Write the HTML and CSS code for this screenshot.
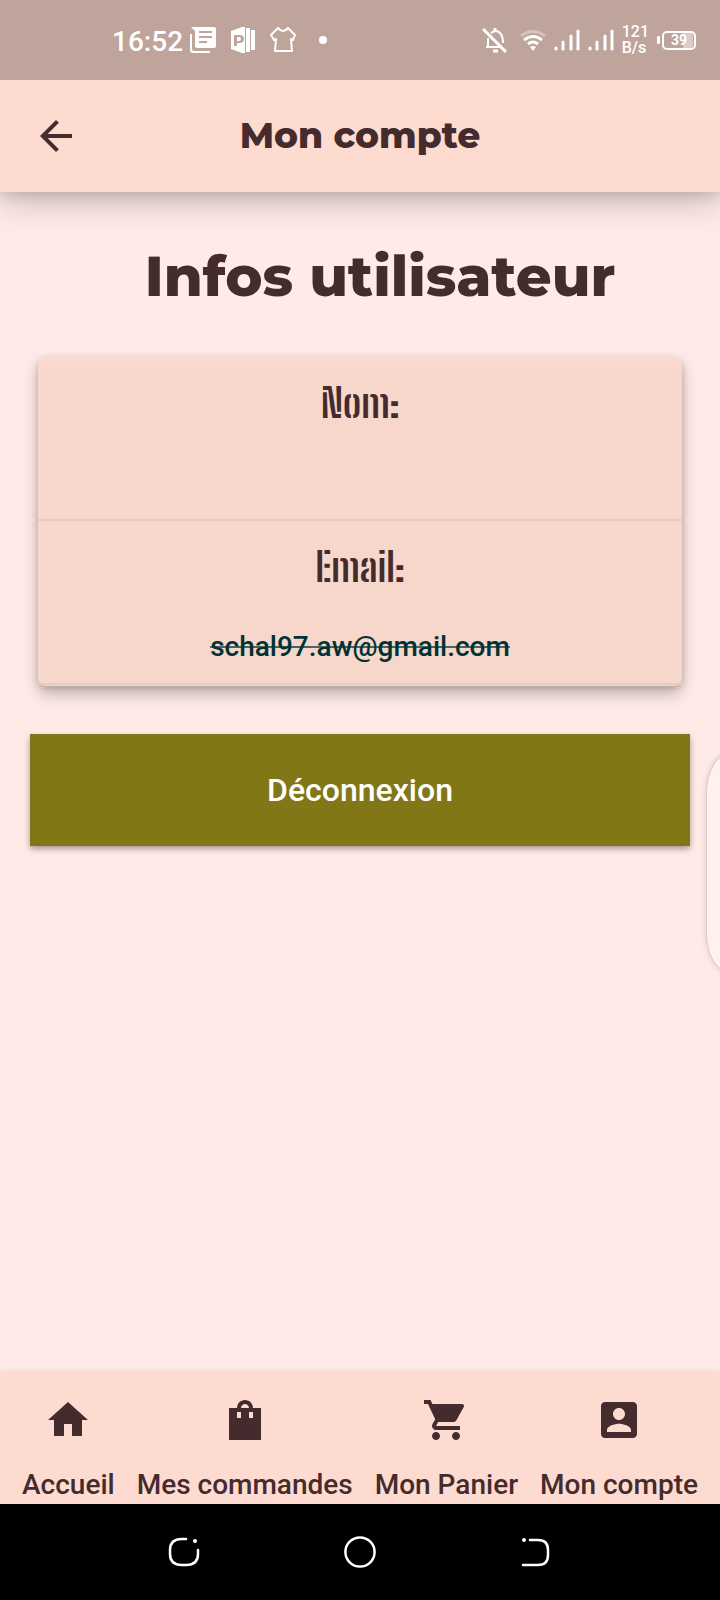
FILE: index.html
```html
<!DOCTYPE html>
<html lang="fr">
<head>
<meta charset="utf-8">
<meta name="viewport" content="width=device-width, initial-scale=1">
<title>Mon compte</title>
<link rel="stylesheet" href="styles.css">
</head>
<body>
<div class="screen">
  <div class="status">
    <div class="status-left">
      <span class="clock">16:52</span>
      <svg class="doc" width="28" height="28" viewBox="0 0 28 28" fill="#fff"><path fill-rule="evenodd" d="M2 1h23q2 0 2 2v17q0 2-2 2H8q-2 0-2-2V5zM10 5v2h13V5zM10 10v2h13v-2zM10 15v2h8v-2z"/><path d="M1 8h2v15q0 2 2 2h16v2H4q-3 0-3-3z"/></svg>
      <svg width="28" height="28" viewBox="0 0 28 28" fill="#fff"><path fill-rule="evenodd" d="M2 5L13 1h3v26h-3L2 23zM5 9v11h3v-3h2q5 0 5-4t-5-4zM8 11h2q2 0 2 2t-2 2H8z"/><path d="M17 2h4v24h-4zM22 4h4v20h-4z"/></svg>
      <svg width="28" height="28" viewBox="0 0 28 28" fill="none" stroke="#fff" stroke-width="2" stroke-linejoin="round"><path d="M9 2L2 9l3 5 2-1-1 12h17l-1-12 2 1 2-5-7-7q-5 6-10 0z"/></svg>
      <svg class="dot" width="8" height="8" viewBox="0 0 8 8"><circle cx="4" cy="4" r="4" fill="#fff"/></svg>
    </div>
    <div class="status-right">
      <svg width="26" height="28" viewBox="0 0 26 28" fill="none" stroke="#fff" stroke-width="2"><path d="M1 3l23 23" stroke-width="3"/><path d="M6 21V12M4 21h14M9 7q5-4 9 0 3 3 3 10"/><path d="M11 25h5M13 2v4" stroke-width="3"/></svg>
      <svg class="wifi" width="26" height="24" viewBox="0 0 26 24" fill="none" stroke="#fff" stroke-width="3"><path d="M1 8q12-9 24 0" opacity=".35"/><path d="M4 12q9-7 18 0M8 16q5-4 10 0"/><path d="M10 19q3-2 6 0l-3 4z" fill="#fff" stroke="none"/></svg>
      <svg width="26" height="22" viewBox="0 0 26 22" stroke="#fff" stroke-width="3" stroke-linecap="round"><path d="M2 19v1M9 13v7M17 7v13M24 2v18"/></svg>
      <svg width="26" height="22" viewBox="0 0 26 22" stroke="#fff" stroke-width="3" stroke-linecap="round"><path d="M2 19v1M9 13v7M17 7v13M24 2v18"/></svg>
      <span class="rate">121<br>B/s</span>
      <span class="battery"><span class="battery-body">39</span></span>
    </div>
  </div>

  <header class="header">
    <button class="back" type="button" aria-label="Retour">
      <svg width="48" height="48" viewBox="0 0 24 24" fill="#442b2d"><path d="M20 11H7.830l5.590-5.590L12 4l-8 8 8 8 1.410-1.410L7.830 13H20z"/></svg>
    </button>
    <h1 class="title">Mon compte</h1>
  </header>

  <main class="content">
    <h2 class="heading">Infos utilisateur</h2>
    <section class="card">
      <div class="field">
        <h3 class="label">Nom:</h3>
        <p class="value"></p>
      </div>
      <div class="field">
        <h3 class="label">Email:</h3>
        <p class="value">schal97.aw@gmail.com</p>
      </div>
    </section>
    <button class="logout" type="button">Déconnexion</button>
    <div class="edge-panel"></div>
  </main>

  <nav class="tabs">
    <a class="tab" href="#accueil"><svg width="48" height="48" viewBox="0 0 24 24"><path d="M10 20v-6h4v6h5v-8h3L12 3 2 12h3v8z"/></svg>Accueil</a>
    <a class="tab" href="#commandes"><svg width="48" height="48" viewBox="0 0 24 24"><path d="M20 6h-4c0-2.210-1.790-4-4-4S8 3.790 8 6H4v16h16V6zm-10 5H8V8h2v3zm2-7c1.100 0 2 .9 2 2h-4c0-1.100.9-2 2-2zm4 7h-2V8h2v3z"/></svg>Mes commandes</a>
    <a class="tab" href="#panier"><svg width="48" height="48" viewBox="0 0 24 24"><path d="M7 18c-1.100 0-1.990.9-1.990 2S5.900 22 7 22s2-.9 2-2-.9-2-2-2zM1 2v2h2l3.600 7.590-1.350 2.450c-.16.280-.25.610-.25.960 0 1.100.9 2 2 2h12v-2H7.420c-.14 0-.25-.11-.25-.25l.03-.12.9-1.630h7.450c.75 0 1.410-.41 1.750-1.030l3.580-6.490c.08-.14.12-.31.12-.48 0-.55-.45-1-1-1H5.210l-.94-2H1zm16 16c-1.100 0-1.990.9-1.990 2s.89 2 1.990 2 2-.9 2-2-.9-2-2-2z"/></svg>Mon Panier</a>
    <a class="tab" href="#compte"><svg width="48" height="48" viewBox="0 0 24 24"><path d="M3 5v14c0 1.100.89 2 2 2h14c1.100 0 2-.9 2-2V5c0-1.100-.9-2-2-2H5c-1.110 0-2 .9-2 2zm12 4c0 1.660-1.340 3-3 3s-3-1.340-3-3 1.340-3 3-3 3 1.340 3 3zm-9 8c0-2 4-3.100 6-3.100s6 1.100 6 3.100v1H6v-1z"/></svg>Mon compte</a>
  </nav>

  <div class="system">
    <button class="sys" type="button" aria-label="Applications récentes"><svg width="32" height="32" viewBox="0 0 32 32"><path d="M18 3h-4Q2 3 2 14v4q0 11 12 11h4q12 0 12-11v-4"/><circle cx="27" cy="5" r="2" fill="#fff" stroke="none"/></svg></button>
    <button class="sys" type="button" aria-label="Écran d'accueil"><svg width="32" height="32" viewBox="0 0 32 32"><circle cx="16" cy="16" r="14.600"/></svg></button>
    <button class="sys" type="button" aria-label="Précédent"><svg width="32" height="32" viewBox="0 0 32 32"><path d="M10 4h8q10 0 10 10v5q0 10-10 10H3"/><circle cx="4" cy="4" r="2" fill="#fff" stroke="none"/></svg></button>
  </div>
</div>
</body>
</html>
```

FILE: styles.css
```css
* { box-sizing: border-box; }
body { margin: 0; font-family: Roboto, "Liberation Sans", sans-serif; color: #442b2d; background: #feeae6; }
h1, h2, h3, p { margin: 0; }
button { border: 0; padding: 0; background: none; font: inherit; color: inherit; cursor: pointer; }
svg { display: block; flex: none; }

.screen { min-height: 100vh; display: flex; flex-direction: column; overflow: hidden; }

.status { position: relative; z-index: 2; height: 80px; padding: 0 24px 0 112px; display: flex; justify-content: space-between; align-items: center; background: #bfa49c; color: #fff; }
.status-left { display: flex; align-items: center; gap: 12px; }
.clock { padding-top: 4px; font-size: 28px; line-height: 32px; font-weight: 500; }
.doc { margin-left: -6px; }
.dot { margin-left: 10px; }
.status-right { display: flex; align-items: center; gap: 8px; }
.wifi { margin: 0 0 0 4px; }
.rate { font-size: 16px; line-height: 16px; font-weight: 500; }
.battery { display: flex; align-items: center; gap: 2px; }
.battery::before { content: ""; width: 3px; height: 8px; border-radius: 1px; background: #fff; }
.battery-body { width: 34px; height: 19px; border: 2px solid #fff; border-radius: 5px; font-size: 14px; line-height: 15px; font-weight: 700; text-align: center; background: linear-gradient(90deg, transparent 65%, #dcccc7 65%); background-clip: content-box; padding: 0 1px; }

.header { position: relative; z-index: 1; height: 112px; padding: 0 32px; display: grid; grid-template-columns: 48px 1fr 48px; align-items: center; background: #fedbd0; box-shadow: 0 10px 32px rgba(0, 0, 0, .2), 0 4px 12px rgba(0, 0, 0, .12); }
.title { padding-bottom: 2px; font-family: Montserrat, Inter, sans-serif; font-size: 36px; line-height: 44px; font-weight: 800; text-align: center; }

.content { position: relative; flex: 1; padding: 48px 30px 0; }
.heading { padding-left: 40px; font-family: Montserrat, Inter, sans-serif; font-size: 56px; line-height: 72px; font-weight: 800; text-align: center; }

.card { margin: 45px 8px 0; padding-bottom: 1px; border-radius: 8px; background: #f7d7cc; box-shadow: inset 6px 16px 12px -8px #fedbd0, 0 8px 16px rgba(0, 0, 0, .24), 0 2px 6px rgba(0, 0, 0, .16); }
.field { height: 164px; padding-top: 20px; display: flex; flex-direction: column; align-items: center; gap: 36px; border-bottom: 2px solid #e9c8bf; }
.label { font-family: "Big Shoulders Stencil Text", "Big Shoulders Stencil Display", "Liberation Sans Narrow", sans-serif; font-size: 40px; line-height: 52px; font-weight: 700; }
.value { font-size: 28px; line-height: 36px; font-weight: 500; color: #033; text-decoration: line-through 2px rgba(0, 51, 51, .7); }

.logout { display: block; width: 100%; height: 112px; margin-top: 48px; background: #827717; color: #fff; font-size: 32px; font-weight: 500; box-shadow: 0 3px 6px rgba(0, 0, 0, .35); }
.edge-panel { position: absolute; right: -36px; top: 561px; width: 50px; height: 220px; border: 1px solid #dccac7; border-radius: 24px / 40px; background: #fff1ef; box-shadow: 0 0 6px rgba(0, 0, 0, .14); }

.tabs { height: 132px; padding-top: 24px; display: flex; justify-content: space-evenly; background: #fedbd0; box-shadow: 0 0 6px rgba(0, 0, 0, .1); }
.tab { display: flex; flex-direction: column; align-items: center; gap: 25px; color: inherit; text-decoration: none; white-space: nowrap; font-size: 28px; line-height: 32px; font-weight: 500; fill: #442b2d; }

.system { height: 96px; padding: 0 96px; display: flex; justify-content: space-around; align-items: center; background: #000; }
.sys svg { fill: none; stroke: #fff; stroke-width: 2.500; stroke-linecap: round; }
```
